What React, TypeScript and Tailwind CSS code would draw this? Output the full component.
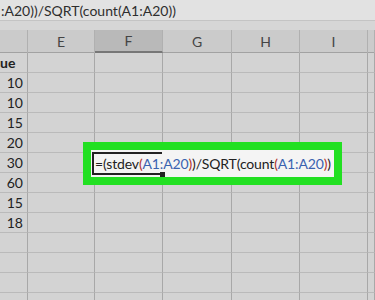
import React from "react";

const cols = ["", "E", "F", "G", "H", "I", ""];
const values = ["ue", "10", "10", "15", "20", "30", "60", "15", "18", "", "", "", ""];

export default function App() {
  const font = { fontFamily: "Lato, 'Noto Sans', sans-serif" };
  return (
    <div className="relative w-[375px] h-[300px] overflow-hidden bg-[#d3d3d3]" style={font}>
      {/* formula bar */}
      <div className="h-[21px] bg-[#e2e2e2] border-b border-[#c4c4c4] flex items-center text-[14px] text-[#2e2e2e] leading-none whitespace-nowrap">
        <span className="pl-[1px] pt-[2px]">:A20))/SQRT(count(A1:A20))</span>
      </div>
      <div className="h-[9px] bg-[#d6d6d6]" />
      {/* header row */}
      <div className="grid grid-cols-[28px_67px_68px_69px_68px_68px_1fr] h-[23px] bg-[#cbcbcb] border-b border-[#a2a2a2]">
        {cols.map((c, i) => (
          <div
            key={i}
            className={
              "flex items-center justify-center text-[14px] text-[#444] border-r border-[#b0b0b0] " +
              (c === "F" ? "bg-[#b9b9b9] border-b-2 border-b-[#777]" : "")
            }
          >
            {c}
          </div>
        ))}
      </div>
      {/* body rows */}
      {values.map((v, r) => (
        <div key={r} className="grid grid-cols-[28px_67px_68px_69px_68px_68px_1fr] h-[20px]">
          {cols.map((_, i) => (
            <div
              key={i}
              className="border-r border-b border-r-[#a8a8a8] border-b-[#bababa] flex items-center"
            >
              {i === 0 && v !== "" && (
                v === "ue" ? (
                  <span className="text-[14px] font-bold text-[#222] leading-none">ue</span>
                ) : (
                  <span className="ml-auto pr-[4px] text-[14px] text-[#222] leading-none">{v}</span>
                )
              )}
            </div>
          ))}
        </div>
      ))}
      {/* highlighted edit box */}
      <div className="absolute left-[83px] top-[142px] w-[259px] h-[43px] bg-[#22e022] p-[8px]">
        <div className="relative w-full h-full bg-[#f4f4f4] flex items-center text-[14px] tracking-[-0.15px] leading-none whitespace-nowrap text-[#222] pl-[4px]">
          <div className="absolute left-[1px] top-[2px] w-[70px] h-[23px] border-2 border-r-0 border-[#222]" />
          <div className="absolute left-[69px] top-[22px] w-[5px] h-[5px] bg-[#222]" />
          <span className="relative">
            =(stdev<span className="text-[#b0302a]">(</span>
            <span className="text-[#3a62b0]">A1:A20</span>
            <span className="text-[#b0302a]">)</span>)/SQRT(count
            <span className="text-[#b0302a]">(</span>
            <span className="text-[#3a62b0]">A1:A20</span>
            <span className="text-[#b0302a]">)</span>)
          </span>
        </div>
      </div>
    </div>
  );
}
